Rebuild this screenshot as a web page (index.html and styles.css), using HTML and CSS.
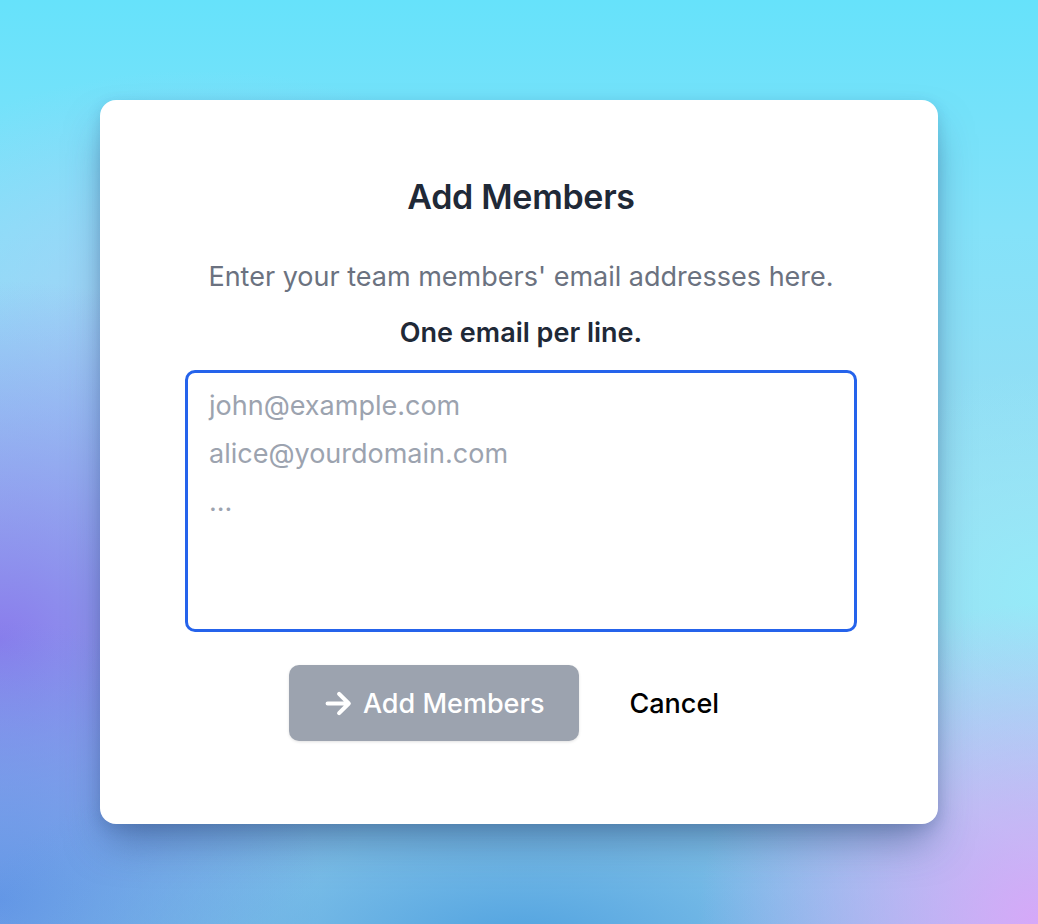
FILE: index.html
```html
<!DOCTYPE html>
<html lang="en">
<head>
<meta charset="utf-8">
<title>Add Members</title>
<link rel="stylesheet" href="styles.css">
</head>
<body>

<div class="modal">
  <h2 class="modal-title">Add Members</h2>
  <p class="modal-desc">Enter your team members' email addresses here.</p>
  <p class="modal-hint">One email per line.</p>

  <textarea class="emails" placeholder="john@example.com&#10;alice@yourdomain.com&#10;..."></textarea>

  <div class="actions">
    <button class="btn btn-primary" disabled>
      <svg class="arrow" viewBox="0 0 24 24" width="29" height="29" fill="none" stroke="currentColor" stroke-width="3.4" stroke-linecap="round" stroke-linejoin="round">
        <path d="M3 12h17M12.5 4l8 8-8 8"/>
      </svg>
      Add Members
    </button>
    <button class="btn btn-plain">Cancel</button>
  </div>
</div>

</body>
</html>
```

FILE: styles.css
```css
*{margin:0;padding:0;box-sizing:border-box;}
html,body{height:100%;}
body{
  font-family:Inter,"Noto Sans",sans-serif;
  padding:100px;
  background:
    radial-gradient(ellipse 340px 320px at 1038px 924px, rgba(214,168,248,1), rgba(214,168,248,0) 100%),
    radial-gradient(ellipse 560px 220px at 520px 940px, rgba(82,163,224,1), rgba(82,163,224,0) 100%),
    radial-gradient(ellipse 320px 280px at 0 900px, rgba(100,150,230,1), rgba(100,150,230,0) 100%),
    radial-gradient(ellipse 430px 360px at 0 640px, rgba(138,124,236,1), rgba(138,124,236,0) 100%),
    radial-gradient(ellipse 240px 220px at 1038px 590px, rgba(150,234,248,1), rgba(150,234,248,0) 100%),
    radial-gradient(ellipse 400px 260px at 200px 330px, rgba(168,206,246,.9), rgba(168,206,246,0) 100%),
    linear-gradient(180deg,#66e2fb 0%,#84e2f9 25%,#9adcf2 55%,#a4d8ef 100%);
}

.modal{
  width:838px;
  height:724px;
  background:#fff;
  border-radius:16px;
  padding:77px 81px 0 85px;
  box-shadow:0 24px 40px -8px rgba(40,70,120,.5), 0 4px 14px rgba(40,70,120,.18);
  text-align:center;
}
.modal-title{font-size:34px;line-height:40px;font-weight:600;color:#1f2937;letter-spacing:-.3px;}
.modal-desc{margin-top:44px;font-size:27px;line-height:32px;color:#6b7280;}
.modal-hint{margin-top:24px;font-size:27px;line-height:32px;font-weight:600;color:#1f2937;}

.emails{
  display:block;
  margin-top:21px;
  width:672px;
  height:262px;
  border:3px solid #2563eb;
  border-radius:10px;
  padding:9px 21px;
  font:27px/48px Inter,"Noto Sans",sans-serif;
  color:#1f2937;
  resize:none;
  outline:none;
}
.emails::placeholder{color:#9ca3af;}

.actions{margin-top:33px;display:flex;justify-content:center;gap:20px;padding-right:4px;}
.btn{
  height:76px;
  padding:0 35px;
  border:0;
  border-radius:10px;
  font:500 27px Inter,"Noto Sans",sans-serif;
  display:flex;align-items:center;gap:10px;
  background:none;
}
.btn-primary{background:#9ca3af;color:#fff;box-shadow:0 1px 3px rgba(0,0,0,.12);}
.btn-plain{color:#000;padding:0 30px;}
.arrow{display:block;}
```
